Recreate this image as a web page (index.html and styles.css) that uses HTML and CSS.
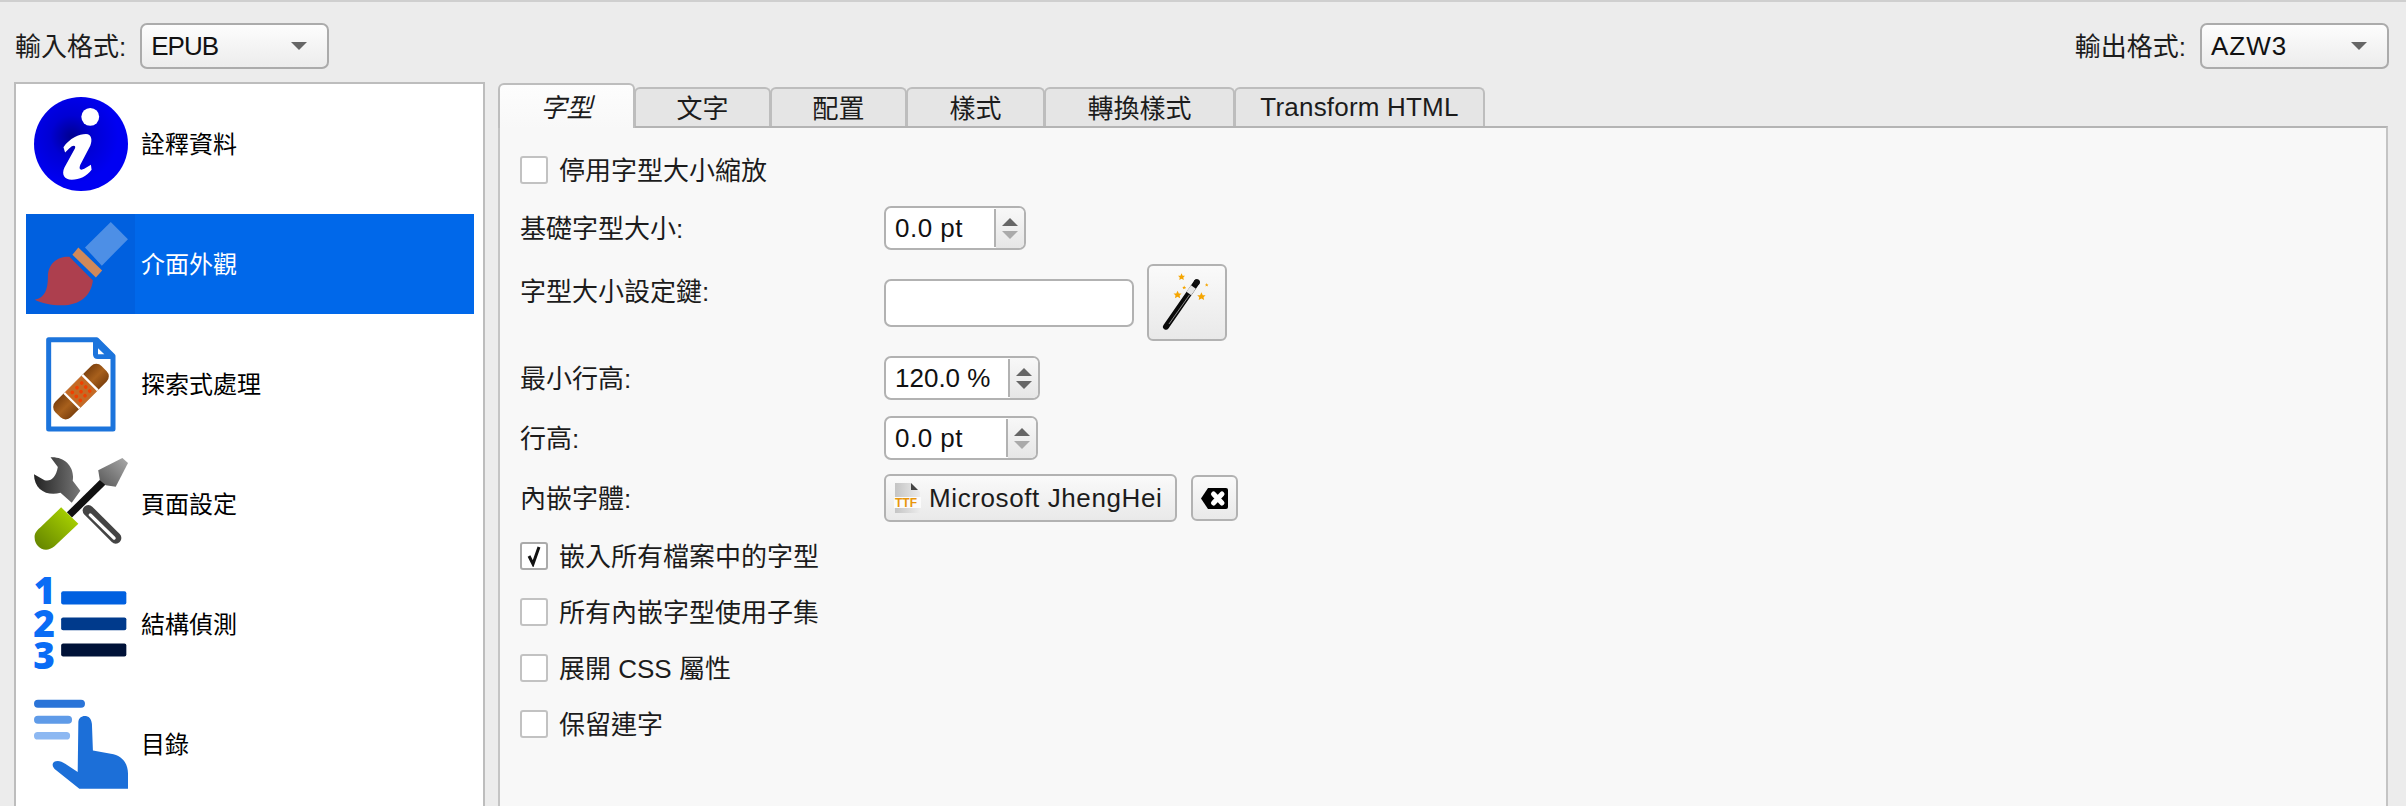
FILE: index.html
```html
<!DOCTYPE html>
<html>
<head>
  <meta charset="utf-8">
  <link rel="stylesheet" href="styles.css">
</head>
<body>
  <div class="top-bar">
    <div class="format">
      <span class="cjk-text">輸入格式:</span>
      <div class="combo"><span class="tight">EPUB</span><i class="combo-arrow"></i></div>
    </div>
    <div class="format">
      <span class="cjk-text">輸出格式:</span>
      <div class="combo"><span class="loose">AZW3</span><i class="combo-arrow"></i></div>
    </div>
  </div>

  <div class="main">
    <ul class="sidebar">
      <li class="side-item">
        <div class="side-icon">
          <svg width="94" height="94" viewBox="98 290 284 284">
            <defs>
              <radialGradient id="info-bg" cx="0.4" cy="0.42" r="0.5">
                <stop offset="0" stop-color="#00008f"/>
                <stop offset="0.45" stop-color="#0000d4"/>
                <stop offset="1" stop-color="#0000f2"/>
              </radialGradient>
            </defs>
            <circle cx="240" cy="432" r="142" fill="url(#info-bg)"/>
            <circle cx="268" cy="350" r="27" fill="#fff"/>
            <path fill="#fff" d="M187 442 C205 415 235 402 255 402 C272 402 275 420 268 437 L238 495 C232 510 240 512 250 507 L270 495 L272 510 C258 530 235 540 212 540 C190 540 180 525 190 503 L222 445 C225 435 215 435 205 445 L192 458 Z"/>
          </svg>
        </div>
        <span class="side-text">詮釋資料</span>
      </li>
      <li class="side-item selected">
        <div class="side-icon">
          <svg width="94" height="84" viewBox="98 665 284 254">
            <path fill="#4d8fe6" d="M330 665 L382 717 L303 797 L252 742 Z"/>
            <path fill="#d0895a" d="M232 742 L304 812 L285 833 L214 764 Z"/>
            <path fill="#ad3f4e" d="M100 900 C130 895 140 870 140 830 C140 790 170 768 205 770 L276 842 C270 890 235 918 180 917 C150 917 120 910 100 900 Z"/>
          </svg>
        </div>
        <span class="side-text">介面外觀</span>
      </li>
      <li class="side-item">
        <div class="side-icon">
          <svg width="70" height="95" viewBox="135 50 210 285">
            <defs>
              <linearGradient id="patch-end" x1="0" y1="0" x2="0" y2="1">
                <stop offset="0" stop-color="#7f420e"/>
                <stop offset="0.5" stop-color="#a8601c"/>
                <stop offset="1" stop-color="#7f420e"/>
              </linearGradient>
            </defs>
            <path fill="#fff" stroke="#1c74dc" stroke-width="15" stroke-linejoin="round" d="M143 58 H287 L336 107 V326 H143 Z"/>
            <path fill="#1c74dc" d="M276 60 H290 L336 106 V116 H290 Q276 116 276 102 Z"/>
            <path fill="#fff" d="M291 84 L310 102 H291 Z"/>
            <g transform="rotate(-45 240 214)">
              <rect x="142" y="181" width="196" height="66" rx="22" fill="url(#patch-end)"/>
              <rect x="198" y="181" width="84" height="66" fill="#fff"/>
              <rect x="205" y="181" width="70" height="66" fill="#c46a25"/>
              <g fill="#f04000">
                <circle cx="220" cy="197" r="5.500"/><circle cx="240" cy="197" r="5.500"/><circle cx="260" cy="197" r="5.500"/>
                <circle cx="220" cy="214" r="5.500"/><circle cx="240" cy="214" r="5.500"/><circle cx="260" cy="214" r="5.500"/>
                <circle cx="220" cy="231" r="5.500"/><circle cx="240" cy="231" r="5.500"/><circle cx="260" cy="231" r="5.500"/>
              </g>
            </g>
          </svg>
        </div>
        <span class="side-text">探索式處理</span>
      </li>
      <li class="side-item">
        <div class="side-icon">
          <svg width="94" height="94" viewBox="98 410 284 284">
            <defs>
              <linearGradient id="wrench" x1="0" y1="0" x2="1" y2="0">
                <stop offset="0" stop-color="#222"/>
                <stop offset="1" stop-color="#777"/>
              </linearGradient>
              <linearGradient id="tip" x1="0" y1="1" x2="1" y2="0">
                <stop offset="0" stop-color="#555"/>
                <stop offset="1" stop-color="#aaa"/>
              </linearGradient>
              <linearGradient id="grip" x1="0" y1="1" x2="1" y2="0">
                <stop offset="0" stop-color="#5f7f00"/>
                <stop offset="1" stop-color="#b4de00"/>
              </linearGradient>
            </defs>
            <path fill="url(#wrench)" d="M148 411 C190 408 222 440 215 482 L238 512 L212 548 L178 518 C140 530 98 510 98 462 L130 480 C150 485 165 470 170 440 Z"/>
            <line x1="262" y1="572" x2="345" y2="655" stroke="#444" stroke-width="34" stroke-linecap="round"/>
            <line x1="268" y1="585" x2="340" y2="655" stroke="#fff" stroke-width="10" stroke-linecap="round"/>
            <line x1="205" y1="585" x2="312" y2="480" stroke="#111" stroke-width="22"/>
            <path fill="url(#tip)" d="M292 450 L365 413 L382 428 L345 500 L315 495 L297 480 Z"/>
            <path fill="url(#grip)" d="M180 562 L232 612 L160 680 C130 705 100 680 100 655 C98 640 108 630 120 620 Z"/>
          </svg>
        </div>
        <span class="side-text">頁面設定</span>
      </li>
      <li class="side-item">
        <div class="side-icon">
          <svg class="digits-icon" width="94" height="94" viewBox="98 770 284 284">
            <g class="list-digit">
              <text x="97" y="851">1</text>
              <text x="96" y="950">2</text>
              <text x="96" y="1048">3</text>
            </g>
            <rect x="180" y="813" width="197" height="40" rx="6" fill="#0060e0"/>
            <rect x="180" y="892" width="197" height="39" rx="6" fill="#003a8c"/>
            <rect x="180" y="971" width="197" height="39" rx="6" fill="#001238"/>
          </svg>
        </div>
        <span class="side-text">結構偵測</span>
      </li>
      <li class="side-item">
        <div class="side-icon">
          <svg width="94" height="90" viewBox="98 1135 284 271">
            <rect x="98" y="1137" width="154" height="24" rx="12" fill="#2a74d8"/>
            <rect x="98" y="1185" width="115" height="24" rx="12" fill="#5f9be8"/>
            <rect x="98" y="1234" width="109" height="23" rx="11" fill="#8db8f2"/>
            <path fill="#1c6fd8" d="M232 1205 C232 1190 245 1184 255 1186 C268 1188 272 1200 273 1210 L276 1290 L330 1300 C365 1305 382 1330 382 1360 V1406 H235 L165 1350 C150 1340 150 1322 170 1322 C185 1322 205 1340 230 1355 Z"/>
          </svg>
        </div>
        <span class="side-text">目錄</span>
      </li>
    </ul>

    <div class="tabs-area">
      <div class="tabs">
        <div class="tab active tab-w1"><span class="cjk-text">字型</span></div>
        <div class="tab tab-w1"><span class="cjk-text">文字</span></div>
        <div class="tab tab-w1"><span class="cjk-text">配置</span></div>
        <div class="tab tab-w2"><span class="cjk-text">樣式</span></div>
        <div class="tab tab-w3"><span class="cjk-text">轉換樣式</span></div>
        <div class="tab tab-w4"><span class="tab-latin">Transform HTML</span></div>
      </div>
      <div class="pane">
        <div class="form">
          <label class="check wide"><i class="box"></i><span class="cjk-text">停用字型大小縮放</span></label>

          <span class="form-label">基礎字型大小:</span>
          <div class="spin spin-a"><span class="spin-value pt">0.0 pt</span><div class="spin-btns"><i class="up"></i><i class="down off"></i></div></div>

          <span class="form-label form-label-top">字型大小設定鍵:</span>
          <div class="key-row">
            <div class="line-edit"></div>
            <div class="tool-btn wand-btn">
              <svg width="53" height="63" viewBox="100 40 160 190">
                <defs>
                  <polygon id="star" fill="#f5a500" points="0,-11 3.400,-3.400 10.500,-3.400 5.400,1.600 6.800,9 0,5.200 -6.800,9 -5.400,1.600 -10.500,-3.400 -3.400,-3.400"/>
                </defs>
                <line x1="115" y1="208" x2="208" y2="74" stroke="#0a0a0a" stroke-width="18" stroke-linecap="round"/>
                <line x1="124" y1="200" x2="186" y2="112" stroke="#8a8a8a" stroke-width="3"/>
                <line x1="184" y1="108" x2="198" y2="88" stroke="#e4e4e4" stroke-width="18"/>
                <circle cx="208" cy="74" r="9" fill="#111"/>
                <use href="#star" transform="translate(162 58)"/>
                <use href="#star" transform="translate(150 112) scale(1.150)"/>
                <use href="#star" transform="translate(222 117) scale(1.200)"/>
                <use href="#star" transform="translate(170 90) scale(0.550)"/>
                <use href="#star" transform="translate(238 82) scale(0.500)"/>
              </svg>
            </div>
          </div>

          <span class="form-label">最小行高:</span>
          <div class="spin spin-b"><span class="spin-value">120.0 %</span><div class="spin-btns"><i class="up"></i><i class="down"></i></div></div>

          <span class="form-label">行高:</span>
          <div class="spin spin-c"><span class="spin-value pt">0.0 pt</span><div class="spin-btns"><i class="up"></i><i class="down off"></i></div></div>

          <span class="form-label form-label-font">內嵌字體:</span>
          <div class="font-row">
            <div class="tool-btn font-btn">
              <svg width="28" height="30" viewBox="0 0 28 30">
                <defs>
                  <linearGradient id="ttf-doc" x1="0" y1="0" x2="1" y2="0">
                    <stop offset="0" stop-color="#c4c4c4"/>
                    <stop offset="1" stop-color="#ececec"/>
                  </linearGradient>
                </defs>
                <path fill="url(#ttf-doc)" d="M1 0 H17 L26 9 V30 H1 Z"/>
                <path fill="#444" d="M17 0 L24 7 H17 Z"/>
                <rect x="0" y="14" width="27" height="11" fill="#fbfbfb"/>
                <text class="ttf" x="1" y="24">TTF</text>
              </svg>
              <span class="font-name">Microsoft JhengHei</span>
            </div>
            <div class="tool-btn clear-btn">
              <svg width="27" height="21" viewBox="0 0 27 21">
                <path fill="#000" d="M7 0 H25 Q27 0 27 2 V19 Q27 21 25 21 H7 L0 10.500 Z"/>
                <path stroke="#fff" stroke-width="5" stroke-linecap="round" d="M12.500 6 L21 15 M21 6 L12.500 15"/>
              </svg>
            </div>
          </div>

          <label class="check wide"><i class="box checked"><svg width="14" height="22" viewBox="0 0 14 22"><path fill="none" stroke="#111" stroke-width="3" d="M2 11 L6 19 L12 2"/></svg></i><span class="cjk-text">嵌入所有檔案中的字型</span></label>
          <label class="check wide"><i class="box"></i><span class="cjk-text">所有內嵌字型使用子集</span></label>
          <label class="check wide"><i class="box"></i><span class="cjk-text">展開 CSS 屬性</span></label>
          <label class="check wide"><i class="box"></i><span class="cjk-text">保留連字</span></label>
        </div>
      </div>
    </div>
  </div>
</body>
</html>
```

FILE: styles.css
```css
html, body {
  height: 100%;
}

body {
  margin: 0;
  background-color: #ececec;
  border-top: 2px solid #cfcfcf;
  box-sizing: border-box;
  overflow: hidden;
  font-family: "Liberation Sans", "Noto Sans CJK TC", sans-serif;
  font-size: 26px;
  color: #1c1c1c;
  display: flex;
  flex-direction: column;
}

/* Noto sits a bit low next to the original system font */
.cjk-text {
  padding-bottom: 3px;
}

.top-bar {
  display: flex;
  justify-content: space-between;
  padding: 21px 17px 0 15px;
  height: 59px;
  box-sizing: border-box;
  flex: none;
}

.format {
  display: flex;
  align-items: center;
  gap: 14px;
  height: 46px;
}

.combo {
  width: 189px;
  height: 46px;
  box-sizing: border-box;
  border: 2px solid #ababab;
  border-radius: 7px;
  background: linear-gradient(#fdfdfd, #ececec);
  padding: 0 20px 0 9px;
  display: flex;
  align-items: center;
  justify-content: space-between;
  color: #111;
}

.tight { letter-spacing: -1px; }
.loose { letter-spacing: 1px; }

.combo-arrow {
  width: 0;
  height: 0;
  border-left: 8px solid transparent;
  border-right: 8px solid transparent;
  border-top: 8px solid #666;
}

.main {
  flex: 1;
  min-height: 0;
  display: flex;
  padding: 0 18px 0 14px;
}

.sidebar {
  list-style: none;
  margin: 21px 13px 0 0;
  padding: 10px 9px 0 10px;
  width: 471px;
  box-sizing: border-box;
  border: 2px solid #bdbdbd;
  border-bottom: 0;
  background-color: #fff;
  flex: none;
  color: #000;
  font-size: 24px;
}

.side-item {
  height: 100px;
  margin-bottom: 20px;
  display: flex;
  align-items: center;
  gap: 6px;
}

.side-item.selected {
  background-color: #0068ea;
  color: #fff;
}

.side-text {
  padding-bottom: 3px;
}

.side-icon {
  width: 109px;
  height: 100%;
  flex: none;
  display: flex;
  align-items: center;
  justify-content: center;
}

.selected .side-icon {
  background-color: #0060df;
}

.digits-icon {
  overflow: visible;
}

.list-digit {
  font-family: "Open Sans", sans-serif;
  font-weight: 800;
  font-size: 112px;
  fill: #0a6cf5;
}

.tabs-area {
  flex: 1;
  min-width: 0;
  display: flex;
  flex-direction: column;
  padding-top: 22px;
}

.tabs {
  display: flex;
  align-items: flex-end;
  height: 43px;
  flex: none;
  position: relative;
  z-index: 1;
}

.tab {
  height: 39px;
  box-sizing: border-box;
  border: 2px solid #bdbdbd;
  border-bottom: 0;
  border-radius: 6px 6px 0 0;
  background-color: #e5e5e5;
  display: flex;
  align-items: center;
  justify-content: center;
  margin-left: -1px;
}

.tab-w1 { width: 137px; }
.tab-w2 { width: 139px; }
.tab-w3 { width: 191px; }
.tab-w4 { width: 251px; }

.tab-latin {
  letter-spacing: 0.2px;
}

.tab.active {
  height: 45px;
  margin-left: 0;
  margin-bottom: -2px;
  width: 137px;
  font-style: italic;
  background: linear-gradient(#fdfdfd, #f8f8f8);
}

.pane {
  flex: 1;
  min-height: 0;
  background-color: #f8f8f8;
  border: 2px solid #b4b4b4;
  border-bottom: 0;
  border-color: #b4b4b4 #c4c4c4;
  padding: 28px 0 0 20px;
}

.form {
  display: grid;
  grid-template-columns: 364px 1fr;
  grid-template-rows: 50px 58px 92px 60px 58px 68px 56px 56px 56px 28px;
  align-items: start;
}

.wide {
  grid-column: 1 / -1;
}

.check {
  display: flex;
  align-items: center;
  height: 28px;
  gap: 11px;
}

.box {
  width: 28px;
  height: 28px;
  box-sizing: border-box;
  border: 2px solid #c2c2c2;
  border-radius: 3px;
  background-color: #fff;
  display: flex;
  align-items: center;
  justify-content: center;
}

.box.checked {
  border-color: #aaa;
}

.form-label {
  height: 44px;
  box-sizing: border-box;
  padding-bottom: 3px;
  display: flex;
  align-items: center;
}

.form-label-top {
  padding-bottom: 0;
  padding-top: 7px;
}

.form-label-font {
  height: 48px;
}

.spin {
  height: 44px;
  box-sizing: border-box;
  border: 2px solid #b2b2b2;
  border-radius: 7px;
  background-color: #fff;
  display: flex;
  align-items: stretch;
}

.spin-a { width: 142px; }
.spin-b { width: 156px; }
.spin-c { width: 154px; }

.spin-value {
  flex: 1;
  padding-left: 9px;
  display: flex;
  align-items: center;
  color: #111;
  border-right: 2px solid #b2b2b2;
  margin: 1px 0;
}

.spin-value.pt {
  letter-spacing: 0.5px;
}

.spin-btns {
  width: 28px;
  background: linear-gradient(#f8f8f8, #e6e6e6);
  border-radius: 0 5px 5px 0;
  display: flex;
  flex-direction: column;
  align-items: center;
  justify-content: center;
  gap: 5px;
}

.up, .down {
  width: 0;
  height: 0;
  border-left: 8px solid transparent;
  border-right: 8px solid transparent;
}

.up { border-bottom: 8px solid #666; }
.down { border-top: 8px solid #666; }
.down.off { border-top-color: #aaa; }

.key-row {
  display: flex;
  align-items: center;
  gap: 13px;
  height: 77px;
}

.line-edit {
  width: 250px;
  height: 48px;
  box-sizing: border-box;
  border: 2px solid #b2b2b2;
  border-radius: 7px;
  background-color: #fff;
}

.tool-btn {
  box-sizing: border-box;
  border: 2px solid #b2b2b2;
  border-radius: 6px;
  background: linear-gradient(#fafafa, #e9e9e9);
  display: flex;
  align-items: center;
  justify-content: center;
}

.wand-btn {
  width: 80px;
  height: 77px;
}

.font-row {
  display: flex;
  align-items: flex-start;
  gap: 14px;
}

.font-btn {
  width: 293px;
  height: 48px;
  gap: 7px;
  justify-content: flex-start;
  padding-left: 8px;
}

.font-name {
  letter-spacing: 0.6px;
}

.clear-btn {
  width: 47px;
  height: 46px;
  margin-top: 1px;
}

.ttf {
  font-size: 12px;
  font-weight: 700;
  fill: #e8960c;
}
```
